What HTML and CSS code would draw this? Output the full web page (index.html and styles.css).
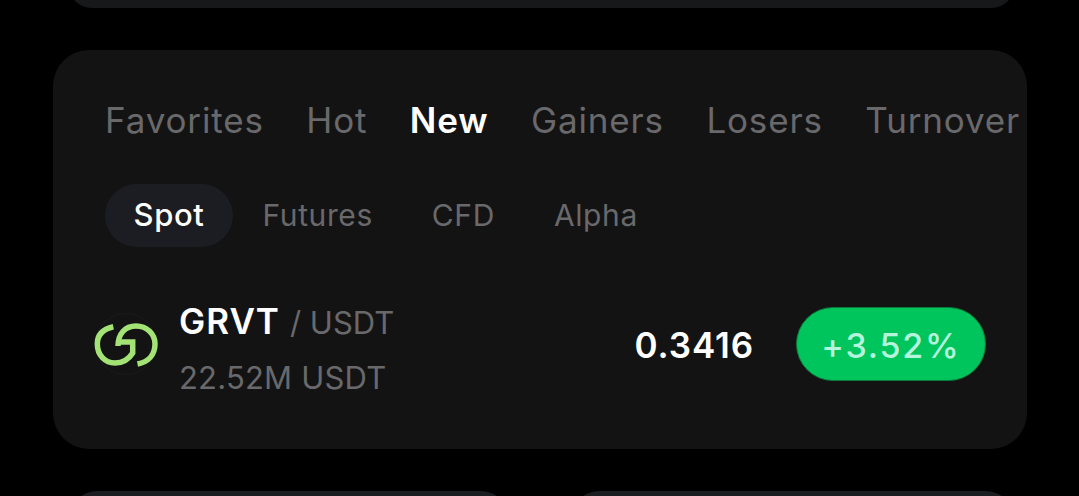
FILE: index.html
```html
<!DOCTYPE html>
<html lang="en">

<head>
    <meta charset="UTF-8">
    <meta name="viewport" content="width=device-width, initial-scale=1.0">
    <title>Markets</title>
    <link rel="stylesheet" href="styles.css">
</head>

<body>
    <div class="top-card"></div>

    <section class="market-card">
        <nav class="tabs">
            <span class="tab">Favorites</span>
            <span class="tab">Hot</span>
            <span class="tab active">New</span>
            <span class="tab">Gainers</span>
            <span class="tab">Losers</span>
            <span class="tab">Turnover</span>
        </nav>

        <div class="subtabs">
            <span class="subtab active">Spot</span>
            <span class="subtab">Futures</span>
            <span class="subtab">CFD</span>
            <span class="subtab">Alpha</span>
        </div>

        <div class="row">
            <svg class="coin" viewBox="0 0 64 64" fill="none">
                <circle cx="32" cy="32" r="30.5" stroke="#1b1c1e" stroke-width="1" />
                <path d="M19.300 14.700C9 17 3.300 23 3.300 32C3.300 43 11 51 21 51C29 51 35 47 38.700 41V30H22" stroke="#a3e275" stroke-width="5.500" />
                <path d="M24 34C24 22 31 14 42 14C53 14 61 22 61 32C61 43 54 50 43.500 52" stroke="#a3e275" stroke-width="5.500" />
            </svg>
            <div class="pair">
                <div class="pair-name"><span class="base">GRVT</span><span class="quote">/ USDT</span></div>
                <div class="volume">22.52M USDT</div>
            </div>
            <div class="price">0.3416</div>
            <div class="change">+3.52%</div>
        </div>
    </section>

    <div class="bottom-cards">
        <div class="bottom-card"></div>
        <div class="bottom-card"></div>
    </div>
</body>

</html>
```

FILE: styles.css
```css
* {
    box-sizing: border-box;
}

html,
body {
    height: 100%;
}

body {
    margin: 0;
    overflow: hidden;
    background-color: #000;
    font-family: Inter, "Noto Sans", sans-serif;
}

.top-card {
    height: 48px;
    margin: -40px 64px 0 68px;
    border-radius: 30px;
    background-color: #17181a;
}

.market-card {
    width: 974px;
    height: 399px;
    margin: 42px 0 0 53px;
    padding: 48px 0 0 53px;
    border-radius: 36px;
    background-color: #131314;
    overflow: hidden;
}

.tabs {
    display: flex;
    gap: 42.5px;
    height: 44px;
    margin-left: -1px;
    align-items: center;
    white-space: nowrap;
}

.tab {
    font-size: 35px;
    letter-spacing: 0.85px;
    color: #69696b;
}

.tab.active {
    font-weight: 600;
    color: #fff;
}

.subtabs {
    display: flex;
    align-items: center;
    height: 63px;
    margin: 42px 0 0 -1px;
}

.subtab {
    padding: 0 29.5px 2px;
    font-size: 30px;
    letter-spacing: 0.6px;
    color: #69696b;
}

.subtab.active {
    height: 63px;
    width: 128px;
    padding: 0 0 2px;
    display: flex;
    align-items: center;
    justify-content: center;
    border-radius: 32px;
    background-color: #1c1d22;
    font-size: 31px;
    font-weight: 500;
    color: #fff;
}

.row {
    display: flex;
    align-items: center;
    height: 120px;
    margin: 37px 41px 0 -12px;
}

.coin {
    width: 64px;
    height: 64px;
    flex-shrink: 0;
    margin-right: 21px;
}

.pair {
    flex: 1;
    padding-top: 9px;
}

.pair-name {
    display: flex;
    align-items: baseline;
    gap: 10px;
    line-height: 42px;
}

.base {
    font-size: 35px;
    font-weight: 600;
    letter-spacing: 1px;
    color: #fff;
}

.quote {
    font-size: 31px;
    color: #69696b;
}

.volume {
    margin-top: 14px;
    font-size: 31px;
    letter-spacing: 0.2px;
    line-height: 40px;
    color: #69696b;
}

.price {
    margin-right: 42px;
    padding-top: 2px;
    font-size: 35px;
    font-weight: 600;
    letter-spacing: 0.9px;
    color: #fff;
}

.change {
    width: 190px;
    height: 74px;
    padding-top: 3px;
    display: flex;
    align-items: center;
    justify-content: center;
    border: 1px solid #0b7a3e;
    border-radius: 37px;
    background-color: #00c45c;
    font-size: 34px;
    font-weight: 500;
    letter-spacing: 1.8px;
    color: #b4f5dc;
}

.bottom-cards {
    display: grid;
    grid-template-columns: 442px 445px;
    gap: 60px;
    height: 5px;
    margin: 42px 0 0 68px;
    overflow: hidden;
}

.bottom-card {
    height: 200px;
    border-radius: 30px;
    background-color: #1c1d20;
}
```
